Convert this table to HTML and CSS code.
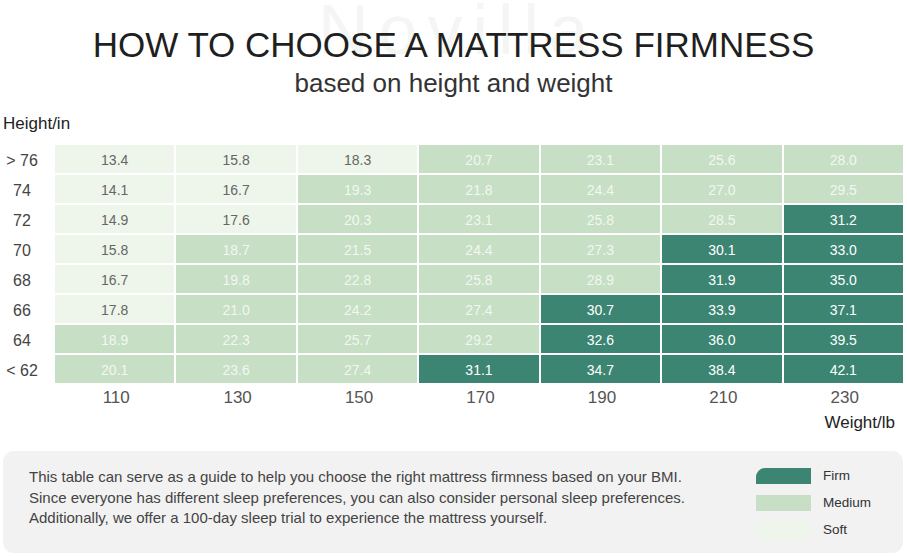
FILE: index.html
```html
<!DOCTYPE html>
<html lang="en">
<head>
<meta charset="utf-8">
<title>How to choose a mattress firmness</title>
<link rel="stylesheet" href="styles.css">
</head>
<body>
<div class="page">
  <div class="watermark">Novilla</div>
  <header class="head">
    <h1 class="title">HOW TO CHOOSE A MATTRESS FIRMNESS</h1>
    <p class="subtitle">based on height and weight</p>
  </header>

  <div class="axis-y">Height/in</div>

  <div class="chart">
    <div class="rlabel">&gt; 76</div>
    <div class="cell soft">13.4</div><div class="cell soft">15.8</div><div class="cell soft">18.3</div><div class="cell med">20.7</div><div class="cell med">23.1</div><div class="cell med">25.6</div><div class="cell med">28.0</div>
    <div class="rlabel">74</div>
    <div class="cell soft">14.1</div><div class="cell soft">16.7</div><div class="cell med">19.3</div><div class="cell med">21.8</div><div class="cell med">24.4</div><div class="cell med">27.0</div><div class="cell med">29.5</div>
    <div class="rlabel">72</div>
    <div class="cell soft">14.9</div><div class="cell soft">17.6</div><div class="cell med">20.3</div><div class="cell med">23.1</div><div class="cell med">25.8</div><div class="cell med">28.5</div><div class="cell firm">31.2</div>
    <div class="rlabel">70</div>
    <div class="cell soft">15.8</div><div class="cell med">18.7</div><div class="cell med">21.5</div><div class="cell med">24.4</div><div class="cell med">27.3</div><div class="cell firm">30.1</div><div class="cell firm">33.0</div>
    <div class="rlabel">68</div>
    <div class="cell soft">16.7</div><div class="cell med">19.8</div><div class="cell med">22.8</div><div class="cell med">25.8</div><div class="cell med">28.9</div><div class="cell firm">31.9</div><div class="cell firm">35.0</div>
    <div class="rlabel">66</div>
    <div class="cell soft">17.8</div><div class="cell med">21.0</div><div class="cell med">24.2</div><div class="cell med">27.4</div><div class="cell firm">30.7</div><div class="cell firm">33.9</div><div class="cell firm">37.1</div>
    <div class="rlabel">64</div>
    <div class="cell med">18.9</div><div class="cell med">22.3</div><div class="cell med">25.7</div><div class="cell med">29.2</div><div class="cell firm">32.6</div><div class="cell firm">36.0</div><div class="cell firm">39.5</div>
    <div class="rlabel">&lt; 62</div>
    <div class="cell med">20.1</div><div class="cell med">23.6</div><div class="cell med">27.4</div><div class="cell firm">31.1</div><div class="cell firm">34.7</div><div class="cell firm">38.4</div><div class="cell firm">42.1</div>
  </div>

  <div class="weights">
    <div></div>
    <div class="clabel">110</div><div class="clabel">130</div><div class="clabel">150</div><div class="clabel">170</div><div class="clabel">190</div><div class="clabel">210</div><div class="clabel">230</div>
  </div>

  <div class="axis-x">Weight/lb</div>

  <div class="note">
    <p class="note-text">This table can serve as a guide to help you choose the right mattress firmness based on your BMI.<br>Since everyone has different sleep preferences, you can also consider personal sleep preferences.<br>Additionally, we offer a 100-day sleep trial to experience the mattress yourself.</p>
    <ul class="legend">
      <li class="legend-item"><span class="swatch swatch-firm"></span><span class="legend-label">Firm</span></li>
      <li class="legend-item"><span class="swatch swatch-med"></span><span class="legend-label">Medium</span></li>
      <li class="legend-item"><span class="swatch swatch-soft"></span><span class="legend-label">Soft</span></li>
    </ul>
  </div>
</div>
</body>
</html>
```
FILE: styles.css
```css
* { box-sizing: border-box; }

html, body {
  margin: 0;
  padding: 0;
  background: #ffffff;
}

body {
  font-family: "Liberation Sans", Arial, Helvetica, sans-serif;
  color: #222;
}

.page {
  position: relative;
  width: 907px;
  height: 557px;
  overflow: hidden;
  display: flex;
  flex-direction: column;
}

.watermark {
  position: absolute;
  left: 318px;
  top: 0;
  font-size: 70px;
  line-height: 60px;
  letter-spacing: 10px;
  color: #f3f6f3;
  z-index: 0;
}

.head {
  position: relative;
  z-index: 1;
  display: flex;
  flex-direction: column;
  align-items: center;
  margin-top: 24px;
}

.title {
  margin: 0;
  font-size: 35px;
  line-height: 42px;
  font-weight: normal;
  color: #1f1f1f;
}

.subtitle {
  margin: 2px 0 0;
  font-size: 26px;
  line-height: 30px;
  color: #333;
}

.axis-y {
  margin: 16px 0 0 3px;
  font-size: 17px;
  line-height: 20px;
  color: #222;
}

.chart,
.weights {
  display: grid;
  grid-template-columns: 53px repeat(7, 1fr);
  column-gap: 2px;
  width: 903px;
}

.chart {
  margin-top: 11px;
  grid-auto-rows: 28px;
  row-gap: 2px;
}

.rlabel {
  padding-right: 9px;
  padding-top: 2px;
  text-align: center;
  font-size: 16px;
  line-height: 28px;
  color: #444;
}

.cell {
  text-align: center;
  font-size: 14px;
  line-height: 28px;
  padding-top: 1px;
}

.soft { background: #eef5ea; color: #666; }
.med  { background: #c6dfc5; color: #f3f7f1; }
.firm { background: #3b8572; color: #ffffff; }

.weights {
  margin-top: 5px;
}

.clabel {
  text-align: center;
  padding-left: 3px;
  font-size: 17px;
  line-height: 20px;
  color: #555;
}

.axis-x {
  align-self: flex-end;
  margin: 5px 12px 0 0;
  font-size: 17px;
  line-height: 20px;
  color: #222;
}

.note {
  display: flex;
  margin: 18px 0 0 3px;
  width: 900px;
  height: 102px;
  padding: 16px 0 0 26px;
  background: #f2f2f2;
  border-radius: 11px;
}

.note-text {
  width: 727px;
  margin: 0;
  font-size: 15px;
  line-height: 20.5px;
  color: #444;
}

.legend {
  list-style: none;
  margin: 1px 0 0;
  padding: 0;
  display: flex;
  flex-direction: column;
  gap: 11px;
}

.legend-item {
  display: flex;
  align-items: center;
  gap: 12px;
  height: 16px;
}

.swatch {
  width: 55px;
  height: 16px;
  display: block;
}

.swatch-firm { background: #3b8572; border-top-left-radius: 9px; }
.swatch-med  { background: #c6dfc5; }
.swatch-soft { background: #eef5ea; height: 18px; }

.legend-label {
  font-size: 13.5px;
  line-height: 16px;
  color: #333;
}
```
